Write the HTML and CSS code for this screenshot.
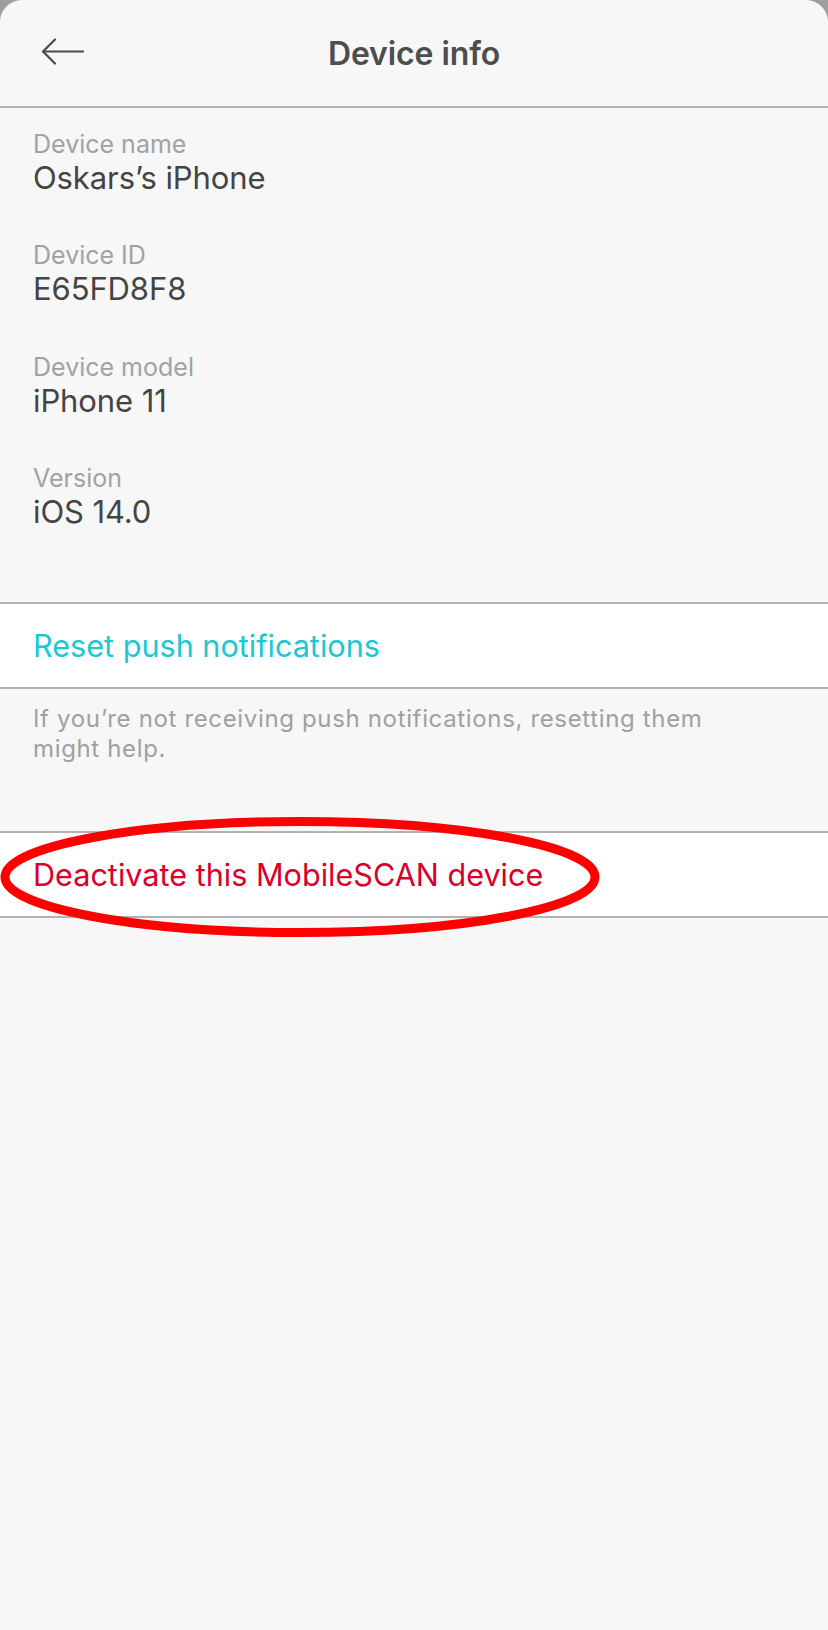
FILE: index.html
```html
<!DOCTYPE html>
<html lang="en">
<head>
<meta charset="utf-8">
<title>Device info</title>
<link rel="stylesheet" href="styles.css">
</head>
<body>
<div class="screen">
  <header class="topbar">
    <button class="back" aria-label="Back">
      <svg width="44" height="28" viewBox="0 0 44 28" fill="none" stroke="#4a4a4a" stroke-width="2.2" stroke-linecap="round" stroke-linejoin="round">
        <path d="M42 13.5 H2.5"/>
        <path d="M14 1.5 L2 13.5 L14 25.5"/>
      </svg>
    </button>
    <h1 class="title">Device info</h1>
    <span class="spacer"></span>
  </header>

  <section class="info">
    <div class="field">
      <div class="label">Device name</div>
      <div class="value">Oskars’s iPhone</div>
    </div>
    <div class="field">
      <div class="label">Device ID</div>
      <div class="value">E65FD8F8</div>
    </div>
    <div class="field">
      <div class="label">Device model</div>
      <div class="value">iPhone 11</div>
    </div>
    <div class="field">
      <div class="label">Version</div>
      <div class="value">iOS 14.0</div>
    </div>
  </section>

  <div class="row action reset">Reset push notifications</div>
  <p class="help">If you’re not receiving push notifications, resetting them might help.</p>

  <div class="row action danger">
    <span>Deactivate this MobileSCAN device</span>
    <svg class="circle" width="610" height="130" viewBox="0 0 610 130" fill="none">
      <ellipse cx="300" cy="60" rx="295" ry="55.5" stroke="#ff0000" stroke-width="9"/>
    </svg>
  </div>
</div>
</body>
</html>
```

FILE: styles.css
```css
* { box-sizing: border-box; }

html, body {
  margin: 0;
  padding: 0;
  background: #9f9f9f;
}

body {
  font-family: Inter, "Noto Sans", "Liberation Sans", sans-serif;
  width: 828px;
  height: 1630px;
  overflow: hidden;
}

.screen {
  background: #f7f7f7;
  border-radius: 22px 22px 0 0;
  min-height: 1630px;
}

.topbar {
  height: 108px;
  border-bottom: 2px solid #b3b3b3;
  display: grid;
  grid-template-columns: 120px 1fr 120px;
  align-items: center;
}

.back {
  border: 0;
  background: none;
  padding: 0 0 0 41px;
  margin: 0;
  display: flex;
  align-items: center;
  height: 100%;
  margin-top: -2px;
}

.title {
  margin: 0;
  text-align: center;
  font-size: 32px;
  font-weight: 600;
  color: #4d4d4d;
  letter-spacing: -0.1px;
}

.info {
  padding: 21px 0 0 33px;
  height: 494px;
}

.field {
  margin-bottom: 43.3px;
}

.label {
  font-size: 25px;
  line-height: 30px;
  color: #a2a2a2;
}

.value {
  font-size: 31px;
  line-height: 38px;
  color: #444444;
  letter-spacing: -0.1px;
}

.row {
  background: #ffffff;
  border-top: 2px solid #b3b3b3;
  border-bottom: 2px solid #b3b3b3;
  height: 87px;
  display: flex;
  align-items: center;
  padding-left: 33px;
  font-size: 30.6px;
  position: relative;
}

.reset {
  color: #1cc7d4;
}

.help {
  margin: 0;
  padding: 15px 100px 0 33px;
  height: 142px;
  font-size: 24px;
  line-height: 30px;
  letter-spacing: 0.65px;
  color: #a0a0a0;
}

.danger {
  color: #d9002c;
}

.circle {
  position: absolute;
  left: 0;
  top: -16px;
  pointer-events: none;
}
```
